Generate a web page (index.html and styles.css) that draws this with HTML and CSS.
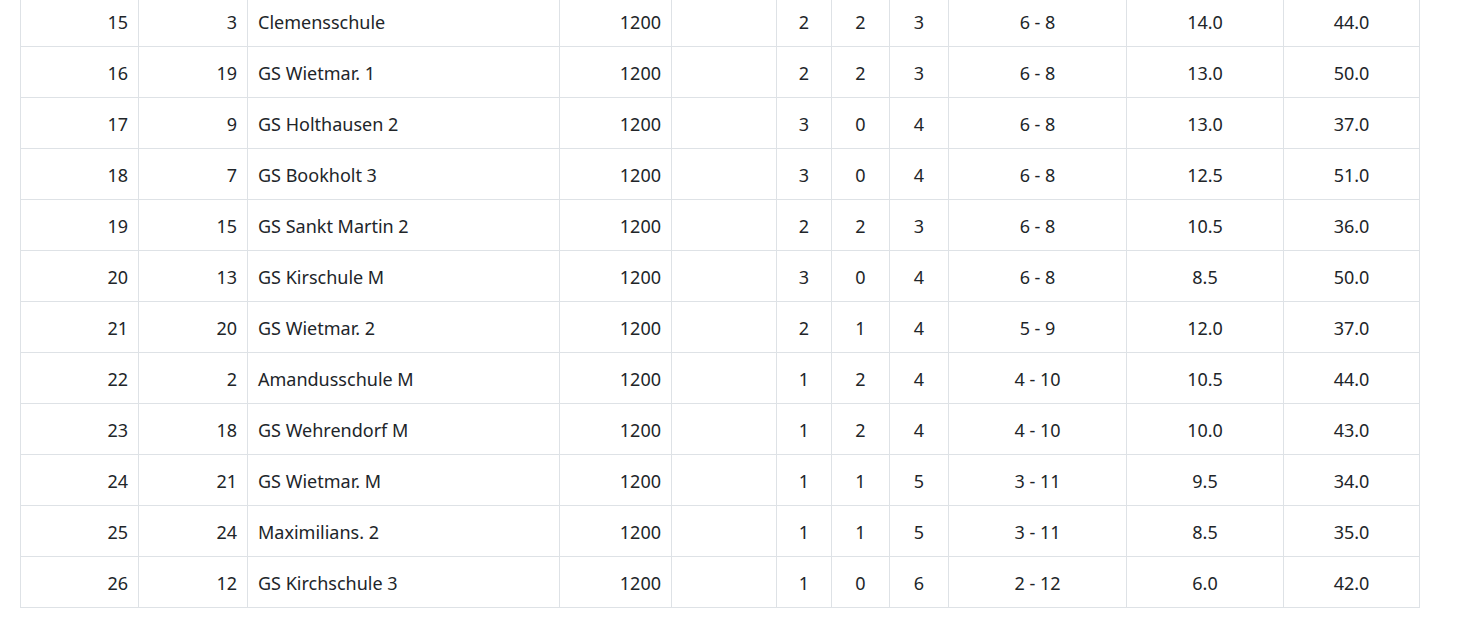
FILE: index.html
```html
<!DOCTYPE html>
<html lang="de">
<head>
<meta charset="utf-8">
<title>Tabelle</title>
<link rel="stylesheet" href="styles.css">
</head>
<body>
<main class="page">
<table class="results">
<colgroup>
<col class="c1"><col class="c2"><col class="c3"><col class="c4"><col class="c5"><col class="c6"><col class="c7"><col class="c8"><col class="c9"><col class="c10"><col class="c11">
</colgroup>
<tbody>
<tr><td class="r">15</td><td class="r">3</td><td>Clemensschule</td><td class="r">1200</td><td></td><td class="c">2</td><td class="c">2</td><td class="c">3</td><td class="c">6 - 8</td><td class="c">14.0</td><td class="c">44.0</td></tr>
<tr><td class="r">16</td><td class="r">19</td><td>GS Wietmar. 1</td><td class="r">1200</td><td></td><td class="c">2</td><td class="c">2</td><td class="c">3</td><td class="c">6 - 8</td><td class="c">13.0</td><td class="c">50.0</td></tr>
<tr><td class="r">17</td><td class="r">9</td><td>GS Holthausen 2</td><td class="r">1200</td><td></td><td class="c">3</td><td class="c">0</td><td class="c">4</td><td class="c">6 - 8</td><td class="c">13.0</td><td class="c">37.0</td></tr>
<tr><td class="r">18</td><td class="r">7</td><td>GS Bookholt 3</td><td class="r">1200</td><td></td><td class="c">3</td><td class="c">0</td><td class="c">4</td><td class="c">6 - 8</td><td class="c">12.5</td><td class="c">51.0</td></tr>
<tr><td class="r">19</td><td class="r">15</td><td>GS Sankt Martin 2</td><td class="r">1200</td><td></td><td class="c">2</td><td class="c">2</td><td class="c">3</td><td class="c">6 - 8</td><td class="c">10.5</td><td class="c">36.0</td></tr>
<tr><td class="r">20</td><td class="r">13</td><td>GS Kirschule M</td><td class="r">1200</td><td></td><td class="c">3</td><td class="c">0</td><td class="c">4</td><td class="c">6 - 8</td><td class="c">8.5</td><td class="c">50.0</td></tr>
<tr><td class="r">21</td><td class="r">20</td><td>GS Wietmar. 2</td><td class="r">1200</td><td></td><td class="c">2</td><td class="c">1</td><td class="c">4</td><td class="c">5 - 9</td><td class="c">12.0</td><td class="c">37.0</td></tr>
<tr><td class="r">22</td><td class="r">2</td><td>Amandusschule M</td><td class="r">1200</td><td></td><td class="c">1</td><td class="c">2</td><td class="c">4</td><td class="c">4 - 10</td><td class="c">10.5</td><td class="c">44.0</td></tr>
<tr><td class="r">23</td><td class="r">18</td><td>GS Wehrendorf M</td><td class="r">1200</td><td></td><td class="c">1</td><td class="c">2</td><td class="c">4</td><td class="c">4 - 10</td><td class="c">10.0</td><td class="c">43.0</td></tr>
<tr><td class="r">24</td><td class="r">21</td><td>GS Wietmar. M</td><td class="r">1200</td><td></td><td class="c">1</td><td class="c">1</td><td class="c">5</td><td class="c">3 - 11</td><td class="c">9.5</td><td class="c">34.0</td></tr>
<tr><td class="r">25</td><td class="r">24</td><td>Maximilians. 2</td><td class="r">1200</td><td></td><td class="c">1</td><td class="c">1</td><td class="c">5</td><td class="c">3 - 11</td><td class="c">8.5</td><td class="c">35.0</td></tr>
<tr><td class="r">26</td><td class="r">12</td><td>GS Kirchschule 3</td><td class="r">1200</td><td></td><td class="c">1</td><td class="c">0</td><td class="c">6</td><td class="c">2 - 12</td><td class="c">6.0</td><td class="c">42.0</td></tr>
</tbody>
</table>
</main>
</body>
</html>
```
FILE: styles.css
```css
html, body {
  margin: 0;
  padding: 0;
  background: #ffffff;
}
body {
  font-family: "Noto Sans", "Open Sans", sans-serif;
  font-size: 18px;
  line-height: 1.5;
  color: #212529;
}
.page {
  padding: 0 60px 0 20px;
  margin-top: -5px;
}
.results {
  width: 1399px;
  table-layout: fixed;
  border-collapse: collapse;
}
.results td {
  border: 1px solid #dee2e6;
  padding: 13px 10px 10px 10px;
  height: 27px;
  white-space: nowrap;
  overflow: hidden;
}
.results td.r { text-align: right; }
.results td.c { text-align: center; }
.c1 { width: 118px; }
.c2 { width: 109px; }
.c3 { width: 312px; }
.c4 { width: 112px; }
.c5 { width: 105px; }
.c6 { width: 55px; }
.c7 { width: 58px; }
.c8 { width: 59px; }
.c9 { width: 178px; }
.c10 { width: 157px; }
.c11 { width: 136px; }
```
